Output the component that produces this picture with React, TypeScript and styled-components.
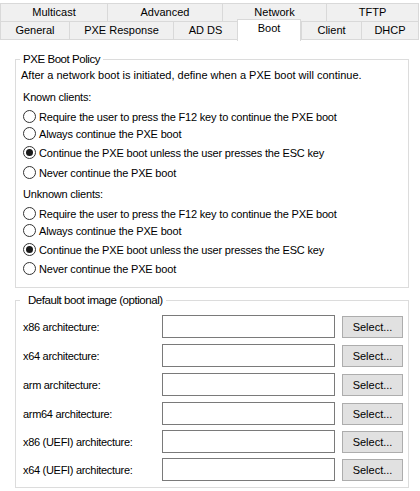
import styled, { createGlobalStyle } from 'styled-components'

const GlobalStyle = createGlobalStyle`
  html, body {
    margin: 0;
    padding: 0;
    background: #ffffff;
  }
  body {
    font-family: "Liberation Sans", Arial, sans-serif;
    font-size: 11px;
    color: #000;
  }
  * {
    box-sizing: border-box;
  }
`

const Window = styled.div`
  width: 420px;
  height: 491px;
  background: #ffffff;
  overflow: hidden;
`

const TabStrip = styled.div`
  padding-top: 3px;
  display: flex;
  flex-direction: column;
`

const TabRow = styled.div<{ $h: number }>`
  display: flex;
  align-items: flex-start;
  height: ${p => p.$h}px;
`

const Tab = styled.div<{ $w: number; $h: number; $last?: boolean; $bottom?: boolean }>`
  width: ${p => p.$w}px;
  height: ${p => p.$h}px;
  flex: none;
  display: flex;
  align-items: center;
  justify-content: center;
  background: #f0f0f0;
  border-top: 1px solid #d9d9d9;
  border-left: 1px solid #d9d9d9;
  border-right: ${p => (p.$last ? '1px solid #d9d9d9' : 'none')};
  border-bottom: ${p => (p.$bottom ? '1px solid #d9d9d9' : 'none')};
  white-space: nowrap;
  padding-bottom: 1px;
`

const ActiveTab = styled.div<{ $w: number }>`
  position: relative;
  z-index: 1;
  width: ${p => p.$w}px;
  height: 22px;
  margin-top: -2px;
  flex: none;
  display: flex;
  justify-content: center;
  padding-top: 2px;
  background: #ffffff;
  border: 1px solid #d9d9d9;
  border-bottom: none;
`

const Panel = styled.div`
  padding: 12px 0 0 15px;
`

const Group = styled.fieldset<{ $mt?: number; $pb: number }>`
  width: 394px;
  margin: ${p => p.$mt ?? 0}px 0 0 0;
  padding: 0 5px ${p => p.$pb}px 4px;
  border: 1px solid #dcdcdc;
  min-width: 0;
`

const Legend = styled.legend<{ $pl: number }>`
  padding: 0 3px 0 ${p => p.$pl}px;
  margin: 0;
  line-height: 14px;
  height: 14px;
  font-size: 11.5px;
  letter-spacing: -0.45px;
`

const Line = styled.div<{ $mt: number; $indent: number; $tight?: boolean }>`
  height: 17px;
  line-height: 17px;
  margin-top: ${p => p.$mt}px;
  padding-left: ${p => p.$indent}px;
  white-space: nowrap;
  letter-spacing: ${p => (p.$tight ? '-0.2px' : '0')};
`

const RadioRow = styled.label<{ $mt: number }>`
  display: flex;
  align-items: center;
  height: 17px;
  margin-top: ${p => p.$mt}px;
  padding-left: 3px;
  white-space: nowrap;
  letter-spacing: -0.18px;
`

const RadioCircle = styled.span<{ $checked?: boolean }>`
  width: 13px;
  height: 13px;
  flex: none;
  border: 1px solid #333333;
  border-radius: 50%;
  background: #ffffff;
  display: flex;
  align-items: center;
  justify-content: center;
  margin-right: 3px;

  &::after {
    content: '';
    display: ${p => (p.$checked ? 'block' : 'none')};
    width: 7px;
    height: 7px;
    border-radius: 50%;
    background: #1a1a1a;
  }
`

const ImageRow = styled.div<{ $mt: number }>`
  display: flex;
  align-items: center;
  height: 23px;
  margin-top: ${p => p.$mt}px;
  padding-left: 3px;
`

const RowLabel = styled.span`
  width: 139px;
  flex: none;
  white-space: nowrap;
  letter-spacing: -0.3px;
`

const PathBox = styled.div`
  width: 173px;
  height: 23px;
  flex: none;
  border: 1px solid #7a7a7a;
  background: #ffffff;
`

const SelectButton = styled.button`
  width: 61px;
  height: 22px;
  margin-left: 7px;
  flex: none;
  padding: 0;
  background: #e1e1e1;
  border: 1px solid #adadad;
  font-family: inherit;
  font-size: 11px;
  color: #000;
`

const topTabs = [
  { label: 'Multicast', w: 107 },
  { label: 'Advanced', w: 115 },
  { label: 'Network', w: 104 },
  { label: 'TFTP', w: 93 },
]

const bottomTabs = [
  { label: 'General', w: 69 },
  { label: 'PXE Response', w: 104 },
  { label: 'AD DS', w: 64 },
  { label: 'Boot', w: 64, active: true },
  { label: 'Client', w: 60 },
  { label: 'DHCP', w: 58 },
]

const options = [
  'Require the user to press the F12 key to continue the PXE boot',
  'Always continue the PXE boot',
  'Continue the PXE boot unless the user presses the ESC key',
  'Never continue the PXE boot',
]

const knownGaps = [2, 0, 2, 3]
const unknownGaps = [2, 0, 2, 2]

const architectures = [
  { label: 'x86 architecture:', mt: 8 },
  { label: 'x64 architecture:', mt: 6 },
  { label: 'arm architecture:', mt: 6 },
  { label: 'arm64 architecture:', mt: 6 },
  { label: 'x86 (UEFI) architecture:', mt: 5 },
  { label: 'x64 (UEFI) architecture:', mt: 5 },
]

export default function App() {
  return (
    <Window>
      <GlobalStyle />
      <TabStrip>
        <TabRow $h={18}>
          {topTabs.map((t, i) => (
            <Tab key={t.label} $w={t.w} $h={18} $last={i === topTabs.length - 1}>
              {t.label}
            </Tab>
          ))}
        </TabRow>
        <TabRow $h={19}>
          {bottomTabs.map((t, i) =>
            t.active ? (
              <ActiveTab key={t.label} $w={t.w}>
                {t.label}
              </ActiveTab>
            ) : (
              <Tab key={t.label} $w={t.w} $h={19} $bottom $last={i === bottomTabs.length - 1}>
                {t.label}
              </Tab>
            )
          )}
        </TabRow>
      </TabStrip>

      <Panel>
        <Group $pb={10}>
          <Legend $pl={3}>PXE Boot Policy</Legend>
          <Line $mt={1} $indent={1}>
            After a network boot is initiated, define when a PXE boot will continue.
          </Line>
          <Line $mt={5} $indent={3} $tight>Known clients:</Line>
          {options.map((o, i) => (
            <RadioRow key={'k' + i} $mt={knownGaps[i]}>
              <RadioCircle $checked={i === 2} />
              {o}
            </RadioRow>
          ))}
          <Line $mt={5} $indent={3} $tight>Unknown clients:</Line>
          {options.map((o, i) => (
            <RadioRow key={'u' + i} $mt={unknownGaps[i]}>
              <RadioCircle $checked={i === 2} />
              {o}
            </RadioRow>
          ))}
        </Group>

        <Group $mt={5} $pb={6}>
          <Legend $pl={8}>Default boot image (optional)</Legend>
          {architectures.map(a => (
            <ImageRow key={a.label} $mt={a.mt}>
              <RowLabel>{a.label}</RowLabel>
              <PathBox />
              <SelectButton>Select...</SelectButton>
            </ImageRow>
          ))}
        </Group>
      </Panel>
    </Window>
  )
}
